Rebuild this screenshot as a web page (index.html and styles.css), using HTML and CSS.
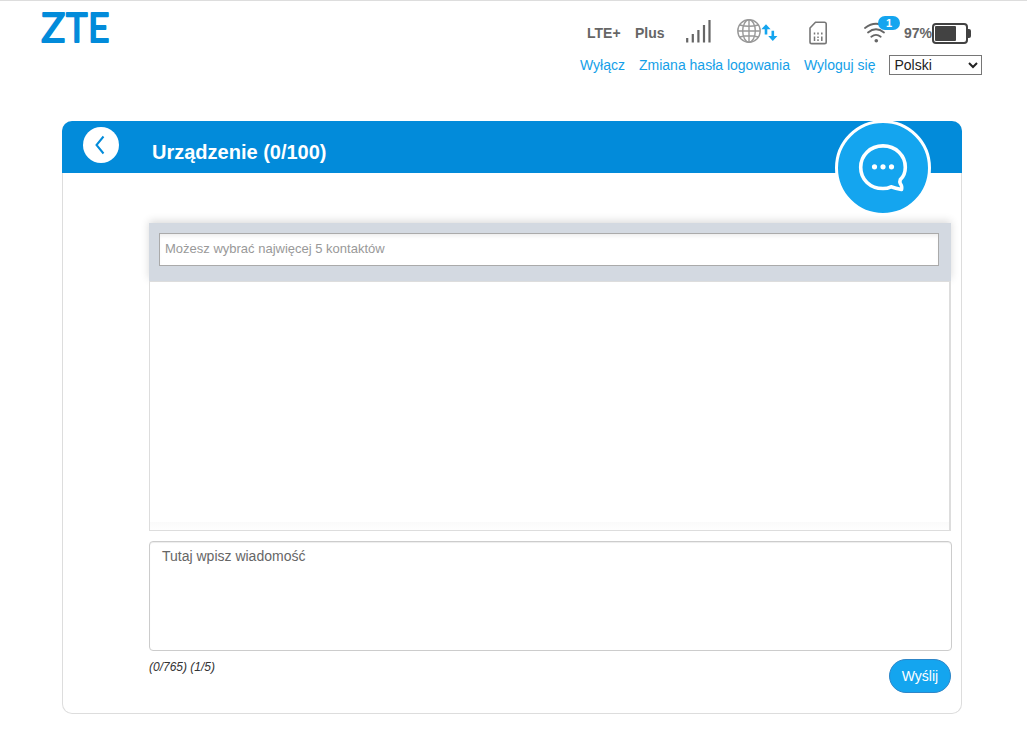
FILE: index.html
```html
<!DOCTYPE html>
<html lang="pl">
<head>
    <meta charset="UTF-8">
    <meta name="viewport" content="width=device-width, initial-scale=1.0">
    <title>ZTE</title>
    <link rel="stylesheet" href="styles.css">
</head>
<body>
    <header class="header">
        <svg class="logo" width="74" height="60" viewBox="0 0 74 60" role="img" aria-label="ZTE">
            <text x="1.3" y="42" textLength="24" lengthAdjust="spacingAndGlyphs">Z</text>
            <text x="26" y="42" textLength="21.5" lengthAdjust="spacingAndGlyphs">T</text>
            <text x="48" y="42" textLength="21.5" lengthAdjust="spacingAndGlyphs">E</text>
        </svg>

        <div class="header-right">
            <!-- Network and battery status -->
            <div class="status">
                <span class="network-type">LTE+</span>
                <span class="operator">Plus</span>
                <svg class="signal" width="25" height="24" viewBox="0 0 25 24">
                    <path d="M1.2 19v4.5M6.8 15v8.5M12.4 11v12.5M18 6v17.5M23.5 1v22.5"/>
                </svg>
                <svg class="globe" width="41" height="26" viewBox="0 0 41 26">
                    <g fill="none" stroke="#999" stroke-width="1.4">
                        <circle cx="12" cy="12" r="11.2"/>
                        <ellipse cx="12" cy="12" rx="6.3" ry="11.2"/>
                        <path d="M12 1v22M1 12h22M2.8 6q9.2 2.4 18.4 0M2.8 18q9.2-2.4 18.4 0"/>
                    </g>
                    <path d="M29 5.2l4.6 5h-3.3v5.3h-2.6v-5.3h-3.3z" fill="#14a5ef"/>
                    <path d="M35.8 22l-4.6-5h3.3v-5.3h2.6V17h3.3z" fill="#14a5ef"/>
                </svg>
                <svg class="sim" width="19" height="24" viewBox="0 0 19 24">
                    <path d="M6.5 1.2h9a1.7 1.7 0 0 1 1.7 1.7v18a1.7 1.7 0 0 1-1.7 1.7H2.7A1.7 1.7 0 0 1 1 20.900V7z" fill="none" stroke="#777" stroke-width="1.6"/>
                    <path d="M5.500 11.500v2M9 11.500v2M12.800 11.500v2M5.500 15.500V20M9 15.500v1.500M9 18.300V20M12.800 15.500V20" stroke="#777" stroke-width="1.500"/>
                </svg>
                <div class="wifi">
                    <svg width="25" height="22" viewBox="0 0 25 22">
                        <g fill="none" stroke="#666" stroke-width="1.8" stroke-linecap="round">
                            <path d="M1 6Q12 -2.500 23 6"/>
                            <path d="M4 10.500Q12 4 20 10.500"/>
                            <path d="M7.300 14.700Q12 11 16.700 14.700"/>
                        </g>
                        <circle cx="12.300" cy="18.800" r="1.800" fill="#666"/>
                    </svg>
                    <span class="badge">1</span>
                </div>
                <span class="battery-level">97%</span>
                <svg class="battery" width="39" height="21" viewBox="0 0 39 21">
                    <rect x="1" y="1" width="34" height="19" rx="3" fill="#fff" stroke="#424242" stroke-width="2"/>
                    <rect x="3" y="3" width="21" height="15" rx="1" fill="#424242"/>
                    <path d="M35 6h2q2 0 2 2v5q0 2-2 2h-2z" fill="#424242"/>
                </svg>
            </div>

            <nav class="links">
                <a href="#">Wyłącz</a>
                <a href="#">Zmiana hasła logowania</a>
                <a href="#">Wyloguj się</a>
                <select class="language">
                    <option>Polski</option>
                    <option>English</option>
                </select>
            </nav>
        </div>
    </header>

    <main class="panel">
        <div class="panel-title">
            <a href="#" class="back" aria-label="Wstecz">
                <svg width="10" height="20" viewBox="0 0 10 20">
                    <path d="M8.5 1.5L1.5 10l7 8.5" fill="none" stroke="#028bda" stroke-width="2"/>
                </svg>
            </a>
            <h1>Urządzenie (0/100)</h1>
            <div class="panel-icon">
                <svg width="50" height="48" viewBox="0 0 50 48">
                    <path d="M25 1.900C12 1.900 2.700 11.500 2.700 23.200C2.700 35.500 12 44.500 25 44.500Q29.500 44.500 33 42.800Q37.500 44.300 43.500 45.500Q44.300 42 42.300 39.500Q41.500 37.500 42.300 35.600Q47.300 31 47.300 23.200C47.300 11.500 38 1.900 25 1.900Z" fill="none" stroke="#fff" stroke-width="3.600" stroke-linejoin="round"/>
                    <g fill="#fff">
                        <circle cx="16.500" cy="22.800" r="2.600"/>
                        <circle cx="25" cy="22.800" r="2.600"/>
                        <circle cx="33.500" cy="22.800" r="2.600"/>
                    </g>
                </svg>
            </div>
        </div>

        <div class="chat">
            <div class="contacts">
                <input type="text" placeholder="Możesz wybrać najwięcej 5 kontaktów">
            </div>
            <div class="messages">
                <div class="messages-end"></div>
            </div>
            <textarea class="message-input" placeholder="Tutaj wpisz wiadomość"></textarea>
            <div class="chat-footer">
                <span class="counter">(0/765) (1/5)</span>
                <button type="button" class="send">Wyślij</button>
            </div>
        </div>
    </main>
</body>
</html>
```
FILE: styles.css
```css
* {
    box-sizing: border-box;
}

body {
    margin: 0;
    background-color: #fff;
    color: #333;
    font-family: "Liberation Sans", Arial, sans-serif;
    font-size: 14px;
}

a {
    color: #14a0e8;
    text-decoration: none;
}

svg {
    display: block;
    flex-shrink: 0;
}

/* Header */
.header {
    display: flex;
    justify-content: space-between;
    height: 121px;
    padding: 8px 45px 0 40px;
    border-top: 1px solid #ddd;
}

.logo {
    margin-top: -9px;
}

.logo text {
    font-family: Lato, sans-serif;
    font-size: 41px;
    fill: #028bda;
    stroke: #028bda;
    stroke-width: 1.8;
    stroke-linejoin: round;
}

.header-right {
    width: 402px;
}

.status {
    display: flex;
    align-items: center;
    height: 46px;
    padding: 2px 0 0 7px;
    color: #666;
    font-weight: bold;
}

.network-type {
    width: 48px;
}

.operator {
    width: 51px;
}

.signal {
    margin: -4px 26px 0 0;
    stroke: #666;
    stroke-width: 2.2;
}

.globe {
    margin: -2px 31px 0 0;
}

.wifi {
    position: relative;
    width: 40px;
    margin-left: 36px;
}

.badge {
    position: absolute;
    top: -6px;
    left: 14px;
    width: 22px;
    height: 14px;
    border-radius: 7px;
    background-color: #14a5ef;
    color: #fff;
    font-size: 11px;
    line-height: 14px;
    text-align: center;
}

.battery-level {
    width: 28px;
}

.links {
    display: flex;
    align-items: center;
    gap: 14px;
    white-space: nowrap;
}

.language {
    width: 93px;
    height: 20px;
    border: 1px solid #767676;
    border-radius: 0;
    background-color: #fff;
    color: #222;
    font-family: inherit;
    font-size: 14px;
    padding: 0;
}

/* Main panel */
.panel {
    width: 900px;
    height: 593px;
    margin-left: 62px;
    border: 1px solid #ddd;
    border-top: none;
    border-radius: 10px;
}

.panel-title {
    position: relative;
    display: flex;
    height: 52px;
    margin: 0 -1px;
    padding: 6px 0 0 21px;
    border-radius: 10px 10px 0 0;
    background-color: #028bda;
}

.panel-title h1 {
    margin: 13px 0 0 33px;
    color: #fff;
    font-size: 20px;
    line-height: 24px;
}

.back {
    display: flex;
    align-items: center;
    justify-content: center;
    width: 36px;
    height: 36px;
    padding-right: 2px;
    border-radius: 50%;
    background-color: #fff;
}

/* Round icon hanging over the title bar */
.panel-icon {
    position: absolute;
    top: -1px;
    right: 31px;
    display: flex;
    align-items: center;
    justify-content: center;
    width: 96px;
    height: 96px;
    border: 3px solid #fff;
    border-radius: 50%;
    background-color: #14a5ef;
}

/* Chat */
.chat {
    width: 803px;
    margin: 50px 0 0 86px;
}

.contacts {
    width: 802px;
    height: 58px;
    padding: 10px;
    background-color: #d3d9e1;
    box-shadow: 0 -2px 8px rgba(0, 0, 0, 0.15);
}

.contacts input {
    display: block;
    width: 780px;
    height: 33px;
    padding: 0 5px 3px;
    border: 1px solid #aaa;
    background-color: #fff;
    box-shadow: inset 0 4px 4px -2px rgba(0, 0, 0, 0.08);
    font-family: inherit;
    font-size: 13px;
}

.contacts input::placeholder {
    color: #999;
}

.messages {
    position: relative;
    display: flex;
    align-items: flex-end;
    width: 802px;
    height: 250px;
    border: 1px solid #ddd;
    border-right-width: 2px;
    background-color: #fff;
}

.messages-end {
    width: 100%;
    height: 8px;
    background: linear-gradient(#fafafa, #fefefe);
}

.message-input {
    display: block;
    width: 803px;
    height: 110px;
    margin-top: 10px;
    padding: 6px 12px;
    border: 1px solid #ccc;
    border-radius: 4px;
    box-shadow: inset 0 1px 1px rgba(0, 0, 0, 0.075);
    font-family: inherit;
    font-size: 14px;
    line-height: 17px;
    resize: none;
}

.message-input::placeholder {
    color: #666;
}

.chat-footer {
    display: flex;
    justify-content: space-between;
    padding: 8px 1px 0 0;
}

.counter {
    font-size: 12px;
    font-style: italic;
    line-height: 16px;
}

.send {
    width: 62px;
    height: 34px;
    padding: 0;
    border: 1px solid #2e86c8;
    border-radius: 17px;
    background-color: #14a5ef;
    color: #fff;
    font-family: inherit;
    font-size: 14px;
}
```
